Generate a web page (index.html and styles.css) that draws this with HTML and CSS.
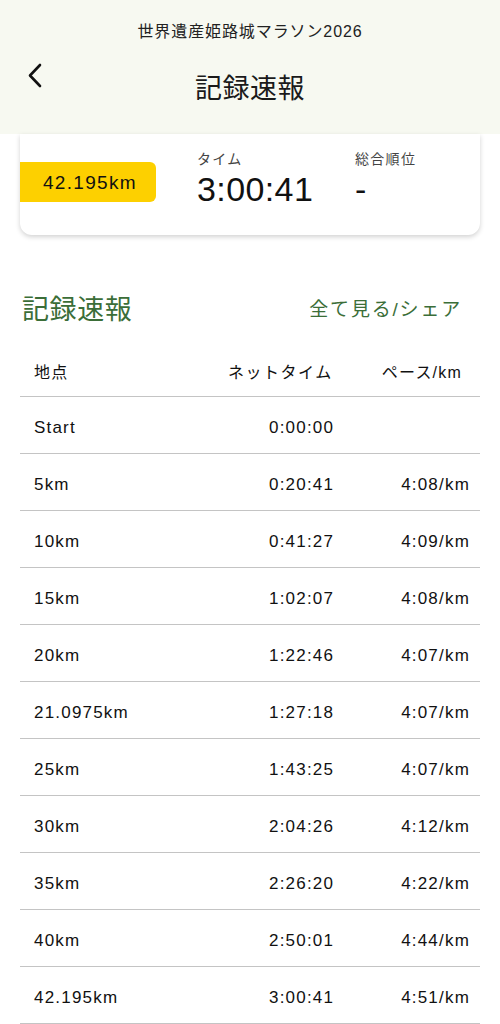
FILE: index.html
```html
<!DOCTYPE html>
<html lang="ja">
<head>
    <meta charset="UTF-8">
    <meta name="viewport" content="width=device-width, initial-scale=1.0">
    <title>記録速報</title>
    <link rel="stylesheet" href="styles.css">
</head>
<body>
    <header class="top-bar">
        <div class="event-name">世界遺産姫路城マラソン2026</div>
        <div class="title-row">
            <a class="back" href="#">
                <svg width="16" height="26" viewBox="0 0 16 26">
                    <path d="M13 2 L3 12.5 L13 23" fill="none" stroke="#111" stroke-width="2.6" stroke-linecap="round" stroke-linejoin="round"/>
                </svg>
            </a>
            <h1>記録速報</h1>
            <span></span>
        </div>
    </header>

    <div class="summary-card">
        <div class="distance-badge">42.195km</div>
        <div class="summary-item time">
            <span class="label">タイム</span>
            <span class="value">3:00:41</span>
        </div>
        <div class="summary-item rank">
            <span class="label">総合順位</span>
            <span class="value">-</span>
        </div>
    </div>

    <div class="section-head">
        <h2>記録速報</h2>
        <a href="#" class="more">全て見る/シェア</a>
    </div>

    <div class="splits">
        <div class="split-head">
            <span class="col-place">地点</span>
            <span class="col-net">ネットタイム</span>
            <span class="col-pace">ペース/km</span>
        </div>
        <div class="split-row"><span class="col-place">Start</span><span class="col-time">0:00:00</span><span class="col-pace"></span></div>
        <div class="split-row"><span class="col-place">5km</span><span class="col-time">0:20:41</span><span class="col-pace">4:08/km</span></div>
        <div class="split-row"><span class="col-place">10km</span><span class="col-time">0:41:27</span><span class="col-pace">4:09/km</span></div>
        <div class="split-row"><span class="col-place">15km</span><span class="col-time">1:02:07</span><span class="col-pace">4:08/km</span></div>
        <div class="split-row"><span class="col-place">20km</span><span class="col-time">1:22:46</span><span class="col-pace">4:07/km</span></div>
        <div class="split-row"><span class="col-place">21.0975km</span><span class="col-time">1:27:18</span><span class="col-pace">4:07/km</span></div>
        <div class="split-row"><span class="col-place">25km</span><span class="col-time">1:43:25</span><span class="col-pace">4:07/km</span></div>
        <div class="split-row"><span class="col-place">30km</span><span class="col-time">2:04:26</span><span class="col-pace">4:12/km</span></div>
        <div class="split-row"><span class="col-place">35km</span><span class="col-time">2:26:20</span><span class="col-pace">4:22/km</span></div>
        <div class="split-row"><span class="col-place">40km</span><span class="col-time">2:50:01</span><span class="col-pace">4:44/km</span></div>
        <div class="split-row"><span class="col-place">42.195km</span><span class="col-time">3:00:41</span><span class="col-pace">4:51/km</span></div>
    </div>
</body>
</html>
```

FILE: styles.css
```css
body {
    margin: 0;
    background-color: #fff;
    color: #111;
    font-family: "Liberation Sans", "Noto Sans CJK JP", sans-serif;
}

.top-bar {
    background-color: #f7f9f1;
    height: 134px;
    padding-top: 20px;
    box-sizing: border-box;
}

.event-name {
    text-align: center;
    font-size: 16px;
    line-height: 24px;
    letter-spacing: 0.9px;
    color: #222;
}

.title-row {
    display: grid;
    grid-template-columns: 59px 1fr 59px;
    align-items: center;
    height: 60px;
    margin-top: 12px;
}

.back {
    display: flex;
    padding-left: 27px;
    margin-top: -20px;
}

.title-row h1 {
    margin: 0;
    text-align: center;
    font-size: 27px;
    font-weight: normal;
    letter-spacing: 0.5px;
    color: #1a1a1a;
}

.summary-card {
    display: flex;
    align-items: flex-start;
    margin: 0 20px;
    height: 101px;
    background-color: #fff;
    border-radius: 0 0 12px 12px;
    box-shadow: 0 2px 5px rgba(0, 0, 0, 0.18);
}

.distance-badge {
    width: 113px;
    height: 40px;
    margin-top: 28px;
    padding-left: 23px;
    line-height: 41px;
    background-color: #fdd000;
    border-radius: 0 6px 6px 0;
    font-size: 19px;
    letter-spacing: 1.3px;
    color: #111;
}

.summary-item {
    display: flex;
    flex-direction: column;
    padding-top: 16px;
}

.summary-item .label {
    font-size: 14px;
    line-height: 18px;
    letter-spacing: 1.3px;
    color: #444;
}

.summary-item .value {
    font-size: 34px;
    line-height: 42px;
    letter-spacing: 0.4px;
    color: #111;
}

.summary-item.time {
    margin-left: 41px;
    width: 158px;
}

.section-head {
    display: flex;
    justify-content: space-between;
    align-items: center;
    margin: 53px 38px 0 22px;
}

.section-head h2 {
    margin: 0;
    font-size: 27px;
    font-weight: normal;
    letter-spacing: 0.6px;
    color: #3b6e38;
}

.section-head .more {
    font-size: 19px;
    letter-spacing: 1.8px;
    color: #3b6e38;
    text-decoration: none;
}

.splits {
    margin: 23px 20px 0;
}

.split-head, .split-row {
    display: flex;
    align-items: center;
    border-bottom: 1px solid #c4c4c4;
    font-size: 17px;
    letter-spacing: 1.2px;
}

.split-head {
    height: 41px;
    padding-bottom: 5px;
    font-size: 16px;
}

.split-row {
    height: 50px;
    padding-top: 6px;
}

.col-place {
    width: 235px;
    padding-left: 14px;
}

.split-head .col-place {
    width: 194px;
}

.col-net {
    width: 151px;
    font-size: 16px;
    letter-spacing: 1.5px;
}

.col-time {
    width: 112px;
}

.col-pace {
    flex: 1;
    text-align: right;
    padding-right: 10px;
}

.split-head .col-pace {
    padding-right: 18px;
}
```
